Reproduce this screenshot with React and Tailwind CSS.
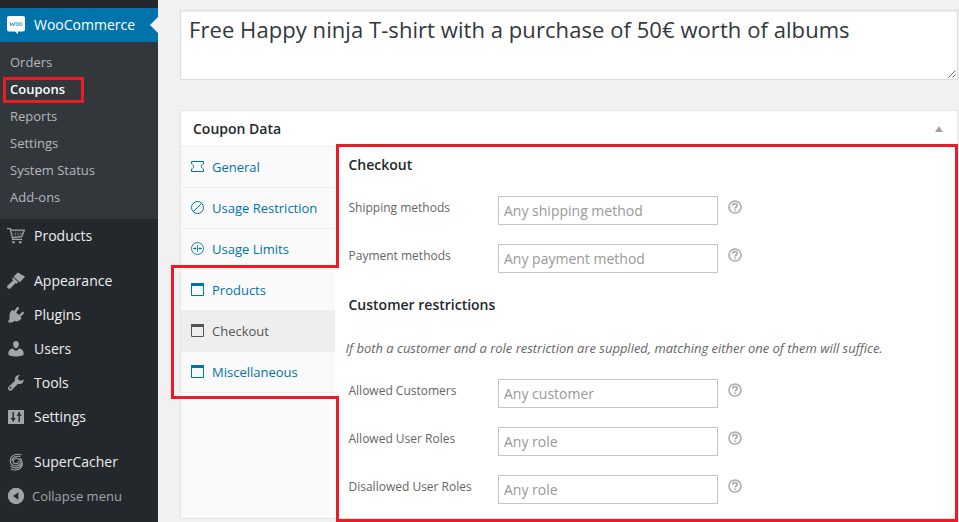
import React from "react";

const subItems = ["Orders", "Coupons", "Reports", "Settings", "System Status", "Add-ons"];

function Icon({ name }) {
  const paths = {
    cart: (
      <g fill="none" stroke="#a0a5aa" strokeWidth="1.3">
        <path d="M0 1.700h3.200l2.600 10.600h9.400" />
        <path d="M4 3.200h13.300l-2.500 6.500-9.200 1" />
        <path d="M8 4l.8 6M11 4v6M14 4l-.8 6M5 6.800h11" strokeWidth="0.350" />
        <path d="M5.200 15.200h2.600M12 15.200h2.600" strokeWidth="2" />
      </g>
    ),
    brush: (
      <path
        fill="#a0a5aa"
        d="M6.600 4.400 10.400.8l2 .3 1.400 1.500 1.500.3 2.900 1.600-5 5.400-1.100-.2-5.700-5.300zM6 5.300l5.300 5-1.300 1.200-1.600-.2-4.800 4.900c-1 .8-2.400.7-3.100-.1-.7-.9-.5-2.200.4-2.900L6 8.600l-.8-2.100z"
      />
    ),
    plug: (
      <path
        fill="#a0a5aa"
        d="M5.400 3.800 7 5.200l2.900-3.900c.9-1 2.700.3 1.900 1.500L9.100 6.400l2.900 2.500 3.200-2.800c1.100-.8 2.400.7 1.500 1.600l-3.300 3 1.300 1.400c-2 3-4.700 4-7.400 3l-2 1.400H1.400v-2l1.400-2.100c-1-3.300.1-6.600 2.600-8.600z"
      />
    ),
    user: (
      <g fill="#a0a5aa">
        <path d="M9 1c2 0 3 1.400 2.900 3.300C11.800 6.600 10.700 8.300 9 8.300S6.200 6.600 6.100 4.300C6 2.400 7 1 9 1z" />
        <path d="M5.500 8.400 9 11l3.500-2.600c2.600.5 4.200 2 4.200 5.500 0 1.500-3 2.500-7.700 2.500s-7.700-1-7.700-2.500c0-3.500 1.600-5 4.200-5.500z" />
      </g>
    ),
    wrench: (
      <path
        fill="#a0a5aa"
        fillRule="evenodd"
        d="M16.700 5.600c.3 3.200-2.900 5.200-5.700 4.200L5 15.900c-1.100 1.100-2.600 1-3.400.1-.9-1-.8-2.400.2-3.400L8 6.800C7.300 3.900 9.300.8 12.900 1.100L10.900 3.400l.6 2.700 2.700.7zM4.300 13.100a1 1 0 1 0-1.500 1.300 1 1 0 0 0 1.500-1.300z"
      />
    ),
    sliders: (
      <g>
        <path fill="#a0a5aa" d="M1 2h16v14H1z" />
        <path d="M6.200 4v9.500M12.200 4v10" stroke="#23282d" strokeWidth="1.400" />
        <path d="m3.500 10 2.700 3.300L8.900 10zM9.500 7.800 12.200 4.500l2.700 3.300z" fill="#23282d" />
      </g>
    ),
    spiral: (
      <g fill="none" stroke="#a0a5aa" strokeWidth="1.100" strokeLinecap="round">
        <path d="M14 1.700C8 .2 3.300 3 3.300 7.600c0 3.400 2.300 5.400 5.400 5.400 2.700 0 4.500-1.700 4.500-4 0-2-1.500-3.500-3.700-3.500-2 0-3.200 1.200-3.200 2.900 0 1.500 1.100 2.400 2.700 2.400s2.300-1 2.100-2.200" />
        <path d="M12.800 3.500C8.700 2.700 5.200 4.300 5.100 7.600" />
        <path d="M13.400 5.300c3.300 3.800.8 9.400-4.300 9.600-2 .1-3.700-.4-5-1.500M4.200 16c5.400 2.500 11.600-.4 11-6.500" />
      </g>
    ),
    collapse: (
      <g>
        <circle cx="9" cy="9" r="8.200" fill="#a0a5aa" />
        <path d="M11.300 5.300v7.400L6 9z" fill="#23282d" />
      </g>
    ),
  };
  return (
    <svg className="mr-[9px] h-[18px] w-[18px] shrink-0" viewBox="0 0 18 18">
      {paths[name]}
    </svg>
  );
}

function MenuItem({ icon, children }) {
  return (
    <div className="flex h-[34px] items-center pl-[7px] text-[14px] text-[#eee]">
      <Icon name={icon} />
      <span className="pb-[2px]">{children}</span>
    </div>
  );
}

function Sidebar() {
  return (
    <aside className="h-[522px] w-[158px] shrink-0 bg-[#23282d] pt-2">
      <div className="relative flex h-[34px] items-center bg-[#0073aa] pl-[7px] text-[14px] text-white">
        <svg className="mr-[9px] h-[18px] w-[18px]" viewBox="0 0 18 18">
          <path d="M2 0h14q2 0 2 2v11.500q0 2-2 2h-5L11 18l-3-2.500H2q-2 0-2-2V2q0-2 2-2z" fill="#fff" />
          <path
            d="M3 6.200 4 9.800 5.500 7 6.600 9.800 8.300 5.800"
            fill="none"
            stroke="#2b8bbb"
            strokeWidth="0.900"
          />
          <ellipse cx="10.300" cy="8.100" rx="1.300" ry="1.600" fill="none" stroke="#2b8bbb" strokeWidth="0.800" />
          <ellipse cx="13.800" cy="8.100" rx="1.300" ry="1.600" fill="none" stroke="#2b8bbb" strokeWidth="0.800" />
        </svg>
        <span className="pb-[2px]">WooCommerce</span>
        <svg className="absolute top-[9px] right-0 h-4 w-2" viewBox="0 0 8 16">
          <path d="M8 0v16L0 8z" fill="#f1f1f1" />
        </svg>
      </div>
      <ul className="h-[177px] bg-[#32373c] pt-[7px] text-[13px] text-[#b4b9be]">
        {subItems.map((item) => (
          <li key={item} className="relative flex h-[27px] items-center pl-[10px]">
            {item === "Coupons" ? (
              <>
                <span className="font-semibold text-white">{item}</span>
                <span className="absolute top-[1px] left-[3px] h-[26px] w-[81px] border-3 border-[#ed1c24]" />
              </>
            ) : (
              <span>{item}</span>
            )}
          </li>
        ))}
      </ul>
      <MenuItem icon="cart">Products</MenuItem>
      <div className="mt-[11px]">
        <MenuItem icon="brush">Appearance</MenuItem>
        <MenuItem icon="plug">Plugins</MenuItem>
        <MenuItem icon="user">Users</MenuItem>
        <MenuItem icon="wrench">Tools</MenuItem>
        <MenuItem icon="sliders">Settings</MenuItem>
      </div>
      <div className="mt-[11px]">
        <MenuItem icon="spiral">SuperCacher</MenuItem>
        <div className="flex h-[34px] items-center pl-[7px] text-[13px] text-[#a0a5aa]">
          <Icon name="collapse" />
          <span className="-ml-[2px] pt-[2px]">Collapse menu</span>
        </div>
      </div>
    </aside>
  );
}

function TabIcon({ name }) {
  return (
    <svg
      className="mr-2 mb-[2px] h-[13px] w-[13px] shrink-0"
      viewBox="0 0 13 13"
      fill="none"
      stroke="currentColor"
    >
      {name === "ticket" && (
        <path d="M.5 1.500h12v2.400c-1.500.6-2.100 1.500-2.100 2.600s.6 2 2.100 2.600v2.400H.5V9.100C2 8.500 2.600 7.600 2.600 6.500S2 4.500.5 3.900z" />
      )}
      {name === "ban" && (
        <>
          <circle cx="6.500" cy="6.500" r="6" />
          <path d="M2.300 10.700 10.700 2.300" />
        </>
      )}
      {name === "limits" && (
        <>
          <circle cx="6.500" cy="6.500" r="6" strokeWidth="0.900" />
          <path d="M6.500 3.300v6.400M2 6.500h3.400M11 6.500H7.600" strokeWidth="0.900" />
          <path d="m3.700 4.900 1.700 1.600-1.700 1.600zM9.300 4.900 7.600 6.500l1.700 1.600z" fill="currentColor" stroke="none" />
        </>
      )}
      {name === "window" && (
        <>
          <path d="M.5.5h12v12H.5z" />
          <path d="M0 0h13v3H0z" fill="currentColor" stroke="none" />
        </>
      )}
    </svg>
  );
}

const tabs = [
  ["General", "ticket"],
  ["Usage Restriction", "ban"],
  ["Usage Limits", "limits"],
  ["Products", "window"],
  ["Checkout", "window"],
  ["Miscellaneous", "window"],
];

function Tabs() {
  return (
    <ul className="w-[154px] shrink-0 bg-[#fafafa] text-[13px] text-[#0073aa]">
      {tabs.map(([label, icon]) => (
        <li
          key={label}
          className={
            label === "Checkout"
              ? "flex h-[41px] items-center border-b border-[#eee] bg-[#eee] pl-[10px] text-[#555]"
              : "flex h-[41px] items-center border-b border-[#eee] pl-[10px]"
          }
        >
          <TabIcon name={icon} />
          <span className="pt-[2px]">{label}</span>
        </li>
      ))}
    </ul>
  );
}

function Field({ label, placeholder }) {
  return (
    <div className="mb-[19px] flex h-[29px]">
      <label className="w-[150px] pt-[3px] pl-[0.5px] text-[12px] leading-[18px] text-[#666]">{label}</label>
      <div className="flex w-[220px] items-center border border-[#c4c4c4] bg-white pl-[5px] text-[14px] text-[#999]">
        {placeholder}
      </div>
      <svg className="mt-1 ml-[10px] h-[14px] w-[14px]" viewBox="0 0 14 14" fill="none" stroke="#aaa">
        <circle cx="7" cy="7" r="6" strokeWidth="1.600" />
        <path d="M4.900 5.700C4.900 4.300 5.800 3.600 7 3.600s2.200.8 2.200 1.900C9.200 6.900 7.200 7 7.100 8.500" strokeWidth="1.700" />
        <path d="M7.100 9.400v1.500" strokeWidth="1.800" />
      </svg>
    </div>
  );
}

export default function App() {
  return (
    <div className="relative flex h-[522px] w-[959px] overflow-hidden bg-[#f1f1f1] font-['Open_Sans',sans-serif]">
      <Sidebar />
      <main className="ml-[22px] w-[778px] pt-[10px]">
        <div className="relative h-[70px] border border-[#ddd] bg-white pl-[8px] text-[22px] leading-[36px] tracking-[0.065px] text-[#32373c] shadow-[inset_0_1px_2px_rgba(0,0,0,0.07)]">
          <span className="whitespace-nowrap">Free Happy ninja T-shirt with a purchase of 50€ worth of albums</span>
          <svg className="absolute right-[1px] bottom-[1px] h-2 w-2" viewBox="0 0 8 8">
            <path d="M.5 7.500l7-7M4.500 7.500l3-3" stroke="#555" strokeWidth="0.900" />
          </svg>
        </div>
        <section className="mt-[30px] h-[409px] border border-[#e5e5e5] bg-white">
          <header className="flex h-[36px] items-center justify-between border-b border-[#eee] pr-[14px] pl-[12px]">
            <h2 className="text-[14px] font-semibold text-[#23282d]">Coupon Data</h2>
            <svg className="mt-px h-[6px] w-2" viewBox="0 0 8 6">
              <path d="M4 0l4 6H0z" fill="#a0a5aa" />
            </svg>
          </header>
          <div className="flex h-[371px]">
            <Tabs />
            <div className="pl-[13px]">
              <h3 className="h-[49px] pt-2 pl-[0.5px] text-[14px] leading-5 font-semibold text-[#23282d]">Checkout</h3>
              <Field label="Shipping methods" placeholder="Any shipping method" />
              <Field label="Payment methods" placeholder="Any payment method" />
              <h3 className="pt-[3px] pl-[0.5px] text-[14px] leading-5 font-semibold text-[#23282d]">
                Customer restrictions
              </h3>
              <p className="-ml-[3px] h-[64px] pt-[23px] pl-[0.5px] text-[13px] leading-5 tracking-[-0.015px] whitespace-nowrap text-[#666] italic">
                If both a customer and a role restriction are supplied, matching either one of them will suffice.
              </p>
              <Field label="Allowed Customers" placeholder="Any customer" />
              <Field label="Allowed User Roles" placeholder="Any role" />
              <Field label="Disallowed User Roles" placeholder="Any role" />
            </div>
          </div>
        </section>
      </main>
      <svg className="pointer-events-none absolute inset-0 h-[522px] w-[959px]" viewBox="0 0 959 522">
        <path
          d="M337.500 145.500H956.500V520.500H337.500V397.500H172.500V266.500H337.500Z"
          fill="none"
          stroke="#ed1c24"
          strokeWidth="3"
        />
      </svg>
    </div>
  );
}
